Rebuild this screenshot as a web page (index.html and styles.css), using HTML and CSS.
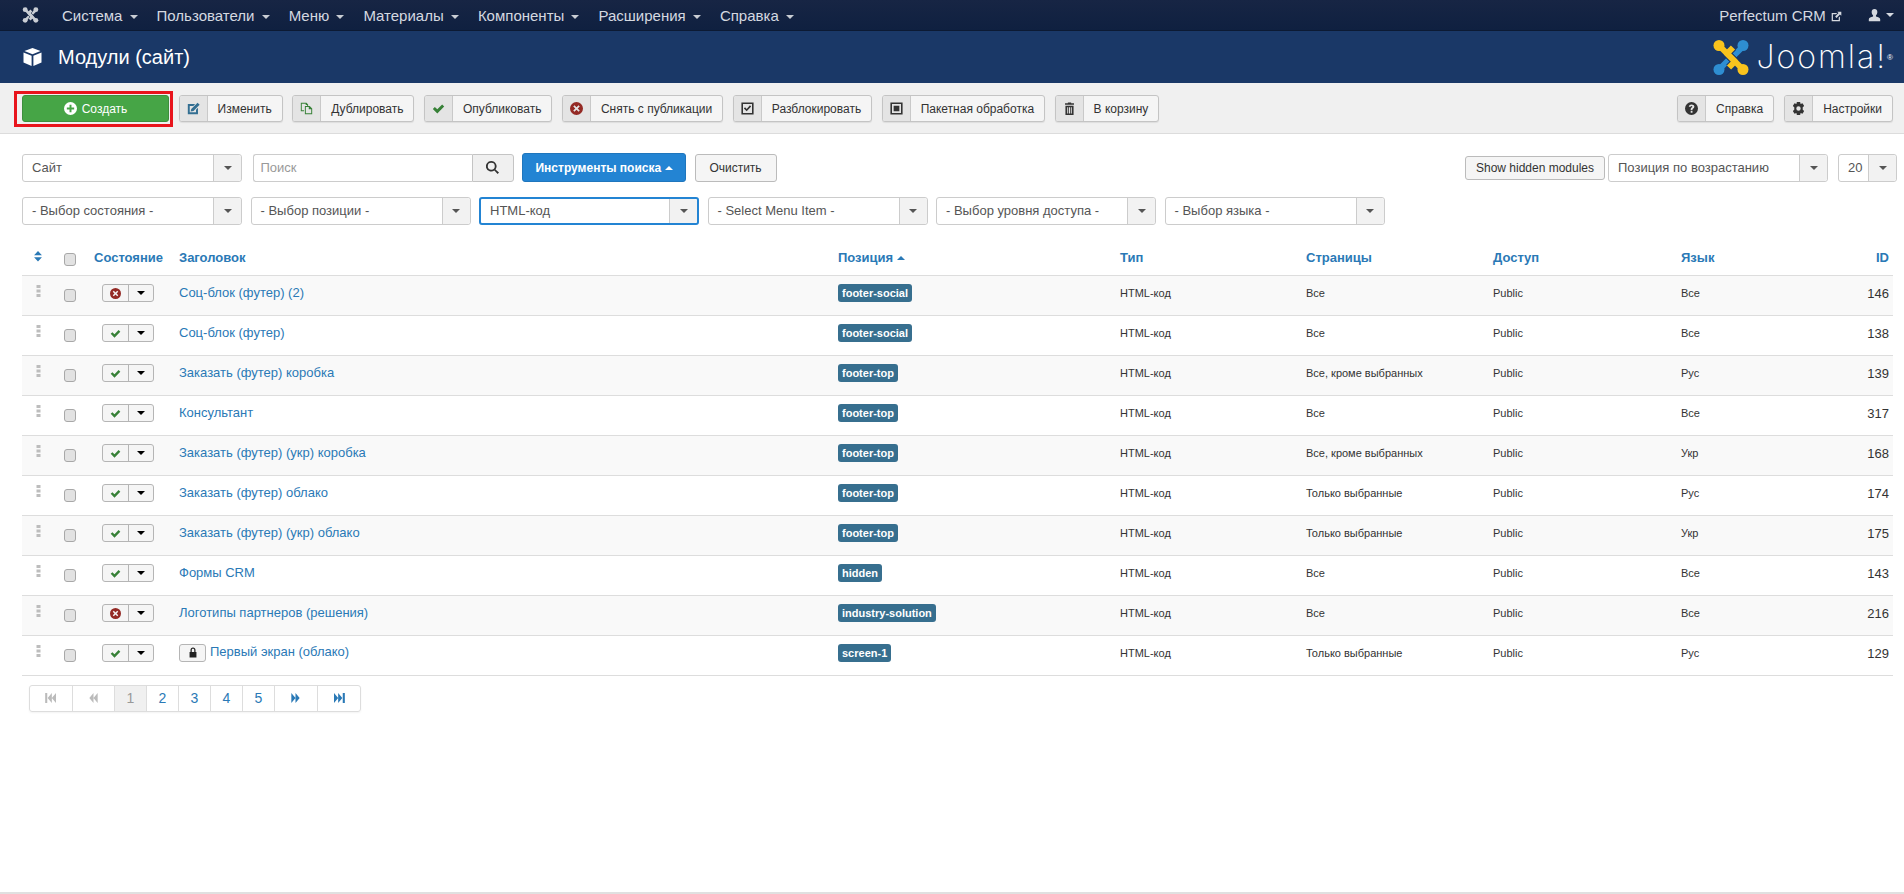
FILE: index.html

```html
<!DOCTYPE html>
<html lang="ru">
<head>
  <meta charset="UTF-8" />
  <title>Модули (сайт)</title>
  <link rel="stylesheet" href="styles.css">
</head>
<body>
  <!-- Icon set -->
  <svg class="defs" width="0" height="0">
    <symbol id="i-joomla" viewBox="0 0 36 36">
      <g fill="none" stroke-linejoin="round">
        <g stroke-width="6">
          <path class="j-b" d="M30 7 L15 22 L20 27"/>
          <path class="j-b" d="M6 30 L21 15 L16 10"/>
        </g>
        <g stroke-width="8">
          <path class="j-gap" d="M9 9 L22 22 L16 28"/>
          <path class="j-gap" d="M27 27 L14 14 L20 8"/>
        </g>
        <g stroke-width="6">
          <path class="j-a" d="M6 6 L22 22 L16 28"/>
          <path class="j-a" d="M30 30 L14 14 L20 8"/>
        </g>
      </g>
      <circle class="j-af" cx="6" cy="6" r="5.500"/><circle class="j-af" cx="30" cy="30" r="5.500"/>
      <circle class="j-bf" cx="30" cy="6" r="5.500"/><circle class="j-bf" cx="6" cy="30" r="5.500"/>
    </symbol>
    <symbol id="i-cube" viewBox="0 0 20 20">
      <path d="M10 0 L19 3.400 L10 7 L1 3.400Z M0 5 L9 8.700 V20 L0 16Z M20 5 L11 8.700 V20 L20 16Z"/>
    </symbol>
    <symbol id="i-plus" viewBox="0 0 16 16">
      <path fill-rule="evenodd" d="M8 0a8 8 0 1 1 0 16A8 8 0 0 1 8 0Zm-1.200 3.500v3.300H3.500v2.400h3.300v3.300h2.400V9.200h3.300V6.800H9.200V3.500Z"/>
    </symbol>
    <symbol id="i-edit" viewBox="0 0 16 16">
      <path d="M1 2.500h9L7.800 4.900H3.400v7.700h7.700V9.400L13.500 7v8H1Z"/><path d="M13 1l2.500 2.500-7.500 7.500L4.500 11.700 5.200 8.500Z"/>
    </symbol>
    <symbol id="i-copy" viewBox="0 0 16 16">
      <path d="M1 1h7l2 2v2H8.800V3.800H7V2.200H2.200v8H5v1.200H1Z"/><path d="M6 5h6l3 3v7H6Zm1.200 1.200v7.600h6.600V9h-3V6.200Z"/>
    </symbol>
    <symbol id="i-check" viewBox="0 0 16 16">
      <path d="M1 8.500 3.500 6l3 3L12.500 3 15 5.500 6.500 14Z"/>
    </symbol>
    <symbol id="i-times" viewBox="0 0 16 16">
      <path fill-rule="evenodd" d="M8 0a8 8 0 1 1 0 16A8 8 0 0 1 8 0ZM5.500 4 4 5.500 6.500 8 4 10.500 5.500 12 8 9.500 10.500 12 12 10.500 9.500 8 12 5.500 10.500 4 8 6.500Z"/>
    </symbol>
    <symbol id="i-checkbox" viewBox="0 0 16 16">
      <path fill-rule="evenodd" d="M0.500 0.500h15v15h-15Zm2 2v11h11v-11Z"/><path d="M3.500 8 5 6.500l2 2 4-4.500L12.500 5.500 7 11.500Z"/>
    </symbol>
    <symbol id="i-square" viewBox="0 0 16 16">
      <path fill-rule="evenodd" d="M0.500 0.500h15v15h-15Zm2 2v11h11v-11Z"/><path d="M4.500 4.500h7v7h-7Z"/>
    </symbol>
    <symbol id="i-trash" viewBox="0 0 16 16">
      <path d="M2.500 1.500H6V.5h4v1h3.500v2h-11Z"/><path fill-rule="evenodd" d="M3 4.500h10V16H3ZM5.200 6.500v7.500h1.200V6.500Zm2.200 0v7.500h1.200V6.500Zm2.200 0v7.500h1.200V6.500Z"/>
    </symbol>
    <symbol id="i-help" viewBox="0 0 16 16">
      <path fill-rule="evenodd" d="M8 0a8 8 0 1 1 0 16A8 8 0 0 1 8 0ZM7 11v2.200h2.200V11Zm1-8C6 3 4.800 4.200 4.700 5.800h2.200c.1-.7.5-1 1.100-1 .6 0 1 .3 1 .9 0 .5-.3.8-.9 1.200C7.200 7.500 7 8.200 7 10h2.200c0-1.100.2-1.400 1-2 .8-.6 1.300-1.300 1.300-2.400C11.500 4 10 3 8 3Z"/>
    </symbol>
    <symbol id="i-gear" viewBox="0 0 16 16">
      <path fill-rule="evenodd" d="M6 0h4l.6 2.400 2.300-1 2.100 3.400L13.200 6.500v3l1.800 1.700-2.100 3.400-2.300-1L10 16H6l-.6-2.400-2.300 1L1 11.200l1.800-1.700v-3L1 4.800l2.100-3.400 2.300 1ZM8 5.300a2.700 2.700 0 1 0 0 5.400 2.700 2.700 0 0 0 0-5.400Z"/>
    </symbol>
    <symbol id="i-search" viewBox="0 0 16 16">
      <path fill-rule="evenodd" d="M6.500 0a6.500 6.500 0 0 1 5.200 10.400L16 14.300 14.300 16l-4-4.300A6.500 6.500 0 1 1 6.500 0Zm0 2.200a4.300 4.300 0 1 0 0 8.600 4.300 4.300 0 0 0 0-8.600Z"/>
    </symbol>
    <symbol id="i-lock" viewBox="0 0 16 16">
      <path fill-rule="evenodd" d="M8 0c2.400 0 4 1.700 4 4v3h1.500v9h-11V7H4V4c0-2.300 1.600-4 4-4Zm0 2C6.800 2 6 2.800 6 4v3h4V4c0-1.200-.8-2-2-2Z"/>
    </symbol>
    <symbol id="i-user" viewBox="0 0 16 16">
      <path d="M8 0c2.200 0 3.500 1.500 3.500 3.800 0 1.700-.7 3.200-1.700 4v1.400c2.600.7 5.200 1.700 5.200 3.300V15H1v-2.500c0-1.600 2.600-2.600 5.200-3.300V7.800c-1-.8-1.700-2.300-1.700-4C4.500 1.500 5.800 0 8 0Z"/>
    </symbol>
    <symbol id="i-ext" viewBox="0 0 16 16">
      <path d="M1 3h8L7.500 4.800H2.800v8.400h8.400V9.500L13 8v7H1Z"/><path d="M9 1h6v6l-2-2-5 5-2-2 5-5Z"/>
    </symbol>
    <symbol id="i-grip" viewBox="0 0 4 12">
      <path d="M0 0h4v3H0Zm0 4.500h4v3H0ZM0 9h4v3H0Z"/>
    </symbol>
    <symbol id="i-sort" viewBox="0 0 10 14">
      <path d="M5 0l5 5.500H0ZM0 8h10l-5 5.500Z"/>
    </symbol>
    <symbol id="i-first" viewBox="0 0 14 12">
      <path d="M0 0h2.500v12H0Zm3 6 5-6v12Zm5 0 5-6v12Z"/>
    </symbol>
    <symbol id="i-prev" viewBox="0 0 12 12">
      <path d="M1 6l5-6v12Zm5 0 5-6v12Z"/>
    </symbol>
    <symbol id="i-next" viewBox="0 0 12 12">
      <path d="M1 0l5 6-5 6Zm5 0 5 6-5 6Z"/>
    </symbol>
    <symbol id="i-last" viewBox="0 0 14 12">
      <path d="M1 0l5 6-5 6Zm5 0 5 6-5 6Zm5.500 0H14v12h-2.500Z"/>
    </symbol>
  </svg>

  <nav class="navbar">
    <svg class="nav-logo"><use href="#i-joomla"/></svg>
    <ul class="nav-menu">
      <li>Система <span class="caret"></span></li>
      <li>Пользователи <span class="caret"></span></li>
      <li>Меню <span class="caret"></span></li>
      <li>Материалы <span class="caret"></span></li>
      <li>Компоненты <span class="caret"></span></li>
      <li>Расширения <span class="caret"></span></li>
      <li>Справка <span class="caret"></span></li>
    </ul>
    <div class="nav-right">
      <span class="site-link">Perfectum CRM <svg class="ext-icon"><use href="#i-ext"/></svg></span>
      <span class="user-link"><svg class="user-icon"><use href="#i-user"/></svg> <span class="caret"></span></span>
    </div>
  </nav>

  <header class="page-head">
    <svg class="cube-icon"><use href="#i-cube"/></svg>
    <h1>Модули (сайт)</h1>
    <div class="brand">
      <svg class="brand-icon"><use href="#i-joomla"/></svg>
      <span class="brand-name">Joomla!</span><span class="brand-reg">®</span>
    </div>
  </header>

  <div class="toolbar">
    <span class="create-wrap"><button class="btn-create"><svg class="ico-plus"><use href="#i-plus"/></svg>Создать</button></span>
    <button class="tb-btn"><span class="tb-ico ic-blue"><svg><use href="#i-edit"/></svg></span><span class="tb-txt">Изменить</span></button>
    <button class="tb-btn"><span class="tb-ico ic-green"><svg><use href="#i-copy"/></svg></span><span class="tb-txt">Дублировать</span></button>
    <button class="tb-btn"><span class="tb-ico ic-green"><svg><use href="#i-check"/></svg></span><span class="tb-txt">Опубликовать</span></button>
    <button class="tb-btn"><span class="tb-ico ic-red"><svg><use href="#i-times"/></svg></span><span class="tb-txt">Снять с публикации</span></button>
    <button class="tb-btn"><span class="tb-ico"><svg><use href="#i-checkbox"/></svg></span><span class="tb-txt">Разблокировать</span></button>
    <button class="tb-btn"><span class="tb-ico"><svg><use href="#i-square"/></svg></span><span class="tb-txt">Пакетная обработка</span></button>
    <button class="tb-btn"><span class="tb-ico"><svg><use href="#i-trash"/></svg></span><span class="tb-txt">В корзину</span></button>
    <div class="tb-right">
      <button class="tb-btn"><span class="tb-ico"><svg><use href="#i-help"/></svg></span><span class="tb-txt">Справка</span></button>
      <button class="tb-btn"><span class="tb-ico"><svg><use href="#i-gear"/></svg></span><span class="tb-txt">Настройки</span></button>
    </div>
  </div>

  <main class="content">
    <div class="filter-row">
      <div class="pick"><span class="pick-val">Сайт</span><span class="pick-arr"><span class="caret"></span></span></div>
      <div class="search">
        <span class="search-input">Поиск</span>
        <span class="search-btn"><svg><use href="#i-search"/></svg></span>
      </div>
      <button class="btn-tools">Инструменты поиска <span class="caret caret-up"></span></button>
      <button class="btn-plain">Очистить</button>
      <div class="filter-right">
        <button class="btn-plain btn-hidden">Show hidden modules</button>
        <div class="pick pick-sort"><span class="pick-val">Позиция по возрастанию</span><span class="pick-arr"><span class="caret"></span></span></div>
        <div class="pick pick-num"><span class="pick-val">20</span><span class="pick-arr"><span class="caret"></span></span></div>
      </div>
    </div>

    <div class="filter-row row-two">
      <div class="pick"><span class="pick-val">- Выбор состояния -</span><span class="pick-arr"><span class="caret"></span></span></div>
      <div class="pick"><span class="pick-val">- Выбор позиции -</span><span class="pick-arr"><span class="caret"></span></span></div>
      <div class="pick pick-active"><span class="pick-val">HTML-код</span><span class="pick-arr"><span class="caret"></span></span></div>
      <div class="pick"><span class="pick-val">- Select Menu Item -</span><span class="pick-arr"><span class="caret"></span></span></div>
      <div class="pick"><span class="pick-val">- Выбор уровня доступа -</span><span class="pick-arr"><span class="caret"></span></span></div>
      <div class="pick"><span class="pick-val">- Выбор языка -</span><span class="pick-arr"><span class="caret"></span></span></div>
    </div>

    <table class="modules">
      <colgroup>
        <col class="c-order"><col class="c-check"><col class="c-state"><col class="c-title"><col class="c-pos">
        <col class="c-type"><col class="c-pages"><col class="c-access"><col class="c-lang"><col>
      </colgroup>
      <thead>
        <tr>
          <th class="center"><svg class="sort-icon"><use href="#i-sort"/></svg></th>
          <th class="center"><input type="checkbox"></th>
          <th>Состояние</th>
          <th>Заголовок</th>
          <th>Позиция <span class="caret caret-up"></span></th>
          <th>Тип</th>
          <th>Страницы</th>
          <th>Доступ</th>
          <th>Язык</th>
          <th class="right">ID</th>
        </tr>
      </thead>
      <tbody>
        <tr>
          <td class="center"><svg class="grip"><use href="#i-grip"/></svg></td>
          <td class="center"><input type="checkbox"></td>
          <td><span class="state"><span class="state-ico ic-red"><svg><use href="#i-times"/></svg></span><span class="state-arr"><span class="caret"></span></span></span></td>
          <td class="title"><a href="#">Соц-блок (футер) (2)</a></td>
          <td><span class="badge">footer-social</span></td>
          <td>HTML-код</td><td>Все</td><td>Public</td><td>Все</td><td class="right id">146</td>
        </tr>
        <tr>
          <td class="center"><svg class="grip"><use href="#i-grip"/></svg></td>
          <td class="center"><input type="checkbox"></td>
          <td><span class="state"><span class="state-ico ic-green"><svg><use href="#i-check"/></svg></span><span class="state-arr"><span class="caret"></span></span></span></td>
          <td class="title"><a href="#">Соц-блок (футер)</a></td>
          <td><span class="badge">footer-social</span></td>
          <td>HTML-код</td><td>Все</td><td>Public</td><td>Все</td><td class="right id">138</td>
        </tr>
        <tr>
          <td class="center"><svg class="grip"><use href="#i-grip"/></svg></td>
          <td class="center"><input type="checkbox"></td>
          <td><span class="state"><span class="state-ico ic-green"><svg><use href="#i-check"/></svg></span><span class="state-arr"><span class="caret"></span></span></span></td>
          <td class="title"><a href="#">Заказать (футер) коробка</a></td>
          <td><span class="badge">footer-top</span></td>
          <td>HTML-код</td><td>Все, кроме выбранных</td><td>Public</td><td>Рус</td><td class="right id">139</td>
        </tr>
        <tr>
          <td class="center"><svg class="grip"><use href="#i-grip"/></svg></td>
          <td class="center"><input type="checkbox"></td>
          <td><span class="state"><span class="state-ico ic-green"><svg><use href="#i-check"/></svg></span><span class="state-arr"><span class="caret"></span></span></span></td>
          <td class="title"><a href="#">Консультант</a></td>
          <td><span class="badge">footer-top</span></td>
          <td>HTML-код</td><td>Все</td><td>Public</td><td>Все</td><td class="right id">317</td>
        </tr>
        <tr>
          <td class="center"><svg class="grip"><use href="#i-grip"/></svg></td>
          <td class="center"><input type="checkbox"></td>
          <td><span class="state"><span class="state-ico ic-green"><svg><use href="#i-check"/></svg></span><span class="state-arr"><span class="caret"></span></span></span></td>
          <td class="title"><a href="#">Заказать (футер) (укр) коробка</a></td>
          <td><span class="badge">footer-top</span></td>
          <td>HTML-код</td><td>Все, кроме выбранных</td><td>Public</td><td>Укр</td><td class="right id">168</td>
        </tr>
        <tr>
          <td class="center"><svg class="grip"><use href="#i-grip"/></svg></td>
          <td class="center"><input type="checkbox"></td>
          <td><span class="state"><span class="state-ico ic-green"><svg><use href="#i-check"/></svg></span><span class="state-arr"><span class="caret"></span></span></span></td>
          <td class="title"><a href="#">Заказать (футер) облако</a></td>
          <td><span class="badge">footer-top</span></td>
          <td>HTML-код</td><td>Только выбранные</td><td>Public</td><td>Рус</td><td class="right id">174</td>
        </tr>
        <tr>
          <td class="center"><svg class="grip"><use href="#i-grip"/></svg></td>
          <td class="center"><input type="checkbox"></td>
          <td><span class="state"><span class="state-ico ic-green"><svg><use href="#i-check"/></svg></span><span class="state-arr"><span class="caret"></span></span></span></td>
          <td class="title"><a href="#">Заказать (футер) (укр) облако</a></td>
          <td><span class="badge">footer-top</span></td>
          <td>HTML-код</td><td>Только выбранные</td><td>Public</td><td>Укр</td><td class="right id">175</td>
        </tr>
        <tr>
          <td class="center"><svg class="grip"><use href="#i-grip"/></svg></td>
          <td class="center"><input type="checkbox"></td>
          <td><span class="state"><span class="state-ico ic-green"><svg><use href="#i-check"/></svg></span><span class="state-arr"><span class="caret"></span></span></span></td>
          <td class="title"><a href="#">Формы CRM</a></td>
          <td><span class="badge">hidden</span></td>
          <td>HTML-код</td><td>Все</td><td>Public</td><td>Все</td><td class="right id">143</td>
        </tr>
        <tr>
          <td class="center"><svg class="grip"><use href="#i-grip"/></svg></td>
          <td class="center"><input type="checkbox"></td>
          <td><span class="state"><span class="state-ico ic-red"><svg><use href="#i-times"/></svg></span><span class="state-arr"><span class="caret"></span></span></span></td>
          <td class="title"><a href="#">Логотипы партнеров (решения)</a></td>
          <td><span class="badge">industry-solution</span></td>
          <td>HTML-код</td><td>Все</td><td>Public</td><td>Все</td><td class="right id">216</td>
        </tr>
        <tr>
          <td class="center"><svg class="grip"><use href="#i-grip"/></svg></td>
          <td class="center"><input type="checkbox"></td>
          <td><span class="state"><span class="state-ico ic-green"><svg><use href="#i-check"/></svg></span><span class="state-arr"><span class="caret"></span></span></span></td>
          <td class="title"><span class="lock"><svg><use href="#i-lock"/></svg></span><a href="#">Первый экран (облако)</a></td>
          <td><span class="badge">screen-1</span></td>
          <td>HTML-код</td><td>Только выбранные</td><td>Public</td><td>Рус</td><td class="right id">129</td>
        </tr>
      </tbody>
    </table>

    <ul class="pager">
      <li class="wide off"><svg class="pg-w"><use href="#i-first"/></svg></li>
      <li class="wide off"><svg class="pg-n"><use href="#i-prev"/></svg></li>
      <li class="on">1</li>
      <li>2</li>
      <li>3</li>
      <li>4</li>
      <li>5</li>
      <li class="wide"><svg class="pg-n"><use href="#i-next"/></svg></li>
      <li class="wide"><svg class="pg-w"><use href="#i-last"/></svg></li>
    </ul>
  </main>

  <footer class="foot"></footer>
</body>
</html>
```

FILE: styles.css

```css
* { margin: 0; padding: 0; box-sizing: border-box; }
html, body { height: 100%; }
body {
  display: flex; flex-direction: column;
  font-family: 'Liberation Sans', Arial, sans-serif;
  font-size: 13px; color: #333; background: #fff;
  overflow: hidden;
}
button { font-family: inherit; cursor: pointer; }
ul { list-style: none; }
svg { fill: currentColor; }
.defs { position: absolute; }

.j-a { stroke: var(--joomla-a, #f9c31d); }
.j-b { stroke: var(--joomla-b, #2e8ed2); }
.j-af { fill: var(--joomla-a, #f9c31d); }
.j-bf { fill: var(--joomla-b, #2e8ed2); }
.j-gap { stroke: var(--joomla-gap, #1a3867); }

.caret {
  display: inline-block; width: 0; height: 0;
  vertical-align: middle;
  border-left: 4px solid transparent;
  border-right: 4px solid transparent;
  border-top: 4px solid currentColor;
}
.caret-up { border-top: 0; border-bottom: 4px solid currentColor; }

/* Top menu */
.navbar {
  display: flex; align-items: center;
  height: 31px; flex: none; padding-left: 22px;
  background: linear-gradient(to bottom, #172544, #0f2040);
  border-bottom: 1px solid #0c1a33;
  color: #d5d9e0; font-size: 15px;
}
.nav-logo {
  width: 17px; height: 16px; margin-right: 23px;
  --joomla-a: #c9cdd4; --joomla-b: #c9cdd4; --joomla-gap: #14233f;
}
.nav-menu { display: flex; }
.nav-menu li { margin-right: 19px; white-space: nowrap; }
.nav-menu li .caret { margin-left: 3px; color: #c9cdd4; }
.nav-right { margin-left: auto; display: flex; align-items: center; padding-right: 10px; }
.site-link { white-space: nowrap; }
.ext-icon { width: 11px; height: 11px; vertical-align: -1px; margin-left: 1px; }
.user-link { margin-left: 26px; display: flex; align-items: center; gap: 5px; }
.user-icon { width: 13px; height: 13px; }

/* Title bar */
.page-head {
  display: flex; align-items: center;
  height: 52px; flex: none; padding-left: 23px;
  background: #1a3867; color: #fff;
}
.cube-icon { width: 19px; height: 18px; margin-right: 16px; }
.page-head h1 { font-size: 20px; font-weight: normal; }
.brand { margin-left: auto; display: flex; align-items: center; padding-right: 11px; }
.brand-icon { width: 36px; height: 37px; margin-right: 8px; }
.brand-name {
  font-family: Inter, 'Liberation Sans', sans-serif;
  font-weight: 200; font-size: 32px; line-height: 36px; letter-spacing: 2px;
}
.brand-reg { font-size: 8px; align-self: flex-start; margin-top: 14px; }

/* Toolbar */
.toolbar {
  display: flex; flex: none; gap: 9.5px;
  height: 51px; padding: 12px 11px 0 22px;
  background: #f0f0f0; border-bottom: 1px solid #dcdcdc;
}
.create-wrap { position: relative; display: block; height: 27px; }
.create-wrap::after {
  content: ""; position: absolute;
  top: -4px; right: -4px; bottom: -5px; left: -8px;
  border: 3px solid #e8141c; pointer-events: none;
}
.btn-create {
  display: flex; align-items: center; justify-content: center; gap: 5px;
  width: 147px; height: 27px;
  background: #46a546; color: #fff; font-size: 12px;
  border: 1px solid #3c8f3c; border-radius: 3px;
}
.ico-plus { width: 13px; height: 13px; }
.tb-btn {
  display: flex; height: 27px;
  background: #f5f5f5; color: #333; font-size: 12px;
  border: 1px solid #c4c4c4; border-radius: 3px;
  box-shadow: 0 1px 1px rgba(0,0,0,0.08);
  overflow: hidden;
}
.tb-ico {
  display: flex; align-items: center; justify-content: center;
  width: 28px; height: 100%;
  background: #e4e4e4; border-right: 1px solid #c9c9c9;
}
.tb-ico svg { width: 13px; height: 13px; }
.tb-txt { display: flex; align-items: center; height: 100%; padding: 0 10px; white-space: nowrap; }
.ic-blue { color: #336f92; }
.ic-green { color: #378137; }
.ic-red { color: #942a25; }
.tb-right { margin-left: auto; display: flex; gap: 10px; }

/* Filters */
.content { flex: 1; padding: 19px 11px 0 22px; }
.filter-row { display: flex; align-items: center; height: 29px; gap: 8.5px; }
.row-two { margin-top: 14px; }
.pick {
  display: flex; width: 220px; height: 28px; flex: none;
  background: #fff; border: 1px solid #ccc; border-radius: 3px;
  color: #555; font-size: 13px;
}
.pick-val { flex: 1; display: flex; align-items: center; padding-left: 9px; white-space: nowrap; }
.pick-arr {
  display: flex; align-items: center; justify-content: center;
  width: 28px; background: #f2f2f2; border-left: 1px solid #ccc; color: #555;
  border-radius: 0 3px 3px 0;
}
.pick-active { border: 2px solid #2384d3; }
.search { display: flex; width: 261px; height: 28px; flex: none; margin-left: 2px; }
.search-input {
  flex: 1; display: flex; align-items: center; padding-left: 7px;
  border: 1px solid #ccc; border-right: 0; border-radius: 3px 0 0 3px;
  color: #999; font-size: 13px;
}
.search-btn {
  display: flex; align-items: center; justify-content: center;
  width: 42px; background: #f0f0f0; border: 1px solid #c4c4c4; border-radius: 0 3px 3px 0;
  color: #333;
}
.search-btn svg { width: 13px; height: 13px; }
.btn-tools {
  height: 29px; width: 164px; flex: none;
  background: #2384d3; color: #fff; font-size: 12px; font-weight: bold;
  border: 1px solid #1f76bd; border-radius: 3px;
}
.btn-plain {
  height: 28px; width: 82px; flex: none;
  background: #f5f5f5; color: #333; font-size: 12px;
  border: 1px solid #bbb; border-radius: 3px;
}
.filter-right { margin-left: auto; display: flex; align-items: center; margin-right: -4px; }
.btn-hidden { width: 140px; height: 24px; margin: 0 3px 0 0; }
.pick-sort { width: 220px; }
.pick-num { width: 59px; margin-left: 10px; }

/* Table */
.modules {
  width: 100%; margin-top: 15px;
  border-collapse: collapse; table-layout: fixed;
  font-size: 11px;
}
.c-order { width: 32px; }
.c-check { width: 32px; }
.c-state { width: 85px; }
.c-title { width: 659px; }
.c-pos { width: 282px; }
.c-type { width: 186px; }
.c-pages { width: 187px; }
.c-access { width: 188px; }
.c-lang { width: 150px; }
.modules th {
  height: 35px; padding: 0 8px; text-align: left;
  font-size: 13px; color: #2a79b6; white-space: nowrap;
}
.modules td {
  height: 40px; padding: 0 8px 4px; border-top: 1px solid #ddd;
  vertical-align: middle; white-space: nowrap;
}
.modules tbody tr:nth-child(odd) td { background: #f9f9f9; }
.modules tbody tr:last-child td { border-bottom: 1px solid #ddd; }
.modules th.center { padding: 0; text-align: center; }
.modules td.center { padding: 0 0 2px; text-align: center; }
.modules .right { text-align: right; padding-right: 4px; }
.modules td.id { font-size: 13px; }
.modules td.title { font-size: 13px; padding-bottom: 5px; }
.modules a { color: #2a79b6; text-decoration: none; }
.sort-icon { width: 8px; height: 11px; color: #2a79b6; }
.grip { width: 5px; height: 12px; color: #bdbdbd; margin-bottom: 4px; }
input[type=checkbox] {
  appearance: none; display: inline-block;
  width: 12px; height: 13px; vertical-align: middle; margin-top: 2px;
  background: #e2e2e2; border: 1px solid #a8a8a8; border-radius: 3px;
}
th input[type=checkbox] { margin-top: 4px; }
.state {
  display: inline-flex; height: 18px; width: 52px; margin: 0 0 0 8px;
  border: 1px solid #b5b5b5; border-radius: 3px; background: #f5f5f5;
  overflow: hidden; vertical-align: middle;
}
.modules td:nth-child(3) { padding: 0 0 4px 8px; }
.state-ico {
  display: flex; align-items: center; justify-content: center;
  width: 26px; border-right: 1px solid #b5b5b5;
}
.state-ico svg { width: 11px; height: 11px; }
.state-arr { flex: 1; display: flex; align-items: center; justify-content: center; color: #000; }
.badge {
  display: inline-block; height: 18px; padding: 0 4px;
  background: #376f8f; color: #fff; border-radius: 3px;
  font-size: 11px; font-weight: bold; line-height: 18px;
}
.lock {
  display: inline-flex; align-items: center; justify-content: center;
  width: 27px; height: 18px; margin-right: 4px;
  border: 1px solid #b5b5b5; border-radius: 3px; background: #f5f5f5; color: #222;
  vertical-align: middle;
}
.lock svg { width: 10px; height: 11px; }

/* Pagination */
.pager {
  display: inline-flex; margin: 9px 0 0 7px; height: 27px;
  border: 1px solid #ddd; border-radius: 3px;
  box-shadow: 0 1px 2px rgba(0,0,0,0.05);
  color: #2a79b6; font-size: 14px;
}
.pager li {
  display: flex; align-items: center; justify-content: center;
  width: 32px; border-right: 1px solid #ddd;
}
.pager li:last-child { border-right: 0; }
.pager .wide { width: 42.5px; }
.pager .off { color: #bbb; }
.pager .on { background: #f0f0f0; color: #999; }
.pg-w { width: 12px; height: 10px; }
.pg-n { width: 11px; height: 10px; }

.foot { height: 2px; flex: none; background: #e0e0e0; }
```
